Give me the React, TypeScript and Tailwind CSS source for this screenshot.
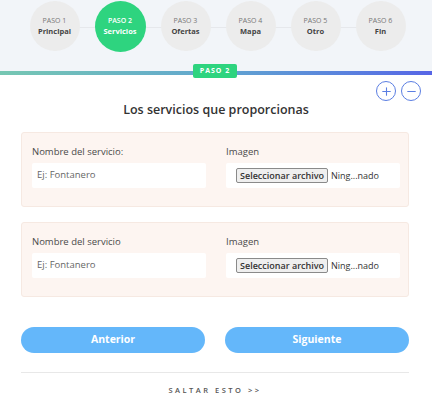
import { Plus, Minus } from 'lucide-react';

const steps = [
  { n: 1, name: 'Principal' },
  { n: 2, name: 'Servicios' },
  { n: 3, name: 'Ofertas' },
  { n: 4, name: 'Mapa' },
  { n: 5, name: 'Otro' },
  { n: 6, name: 'Fin' },
];

function ServiceCard({ label }: { label: string }) {
  return (
    <div className="grid h-[75px] grid-cols-2 gap-[20px] rounded-[3px] border border-[#f6e9e2] bg-[#fdf5f1] pt-[12px] pl-[10px] pr-[8px]">
      <div>
        <div className="mb-[4px] text-[9.5px] text-[#4a4a4a]">{label}</div>
        <div className="flex h-[25px] items-center rounded-[2px] bg-white px-[5px] text-[9.5px] text-[#666]">Ej: Fontanero</div>
      </div>
      <div>
        <div className="mb-[4px] text-[9.5px] text-[#4a4a4a]">Imagen</div>
        <div className="flex h-[25px] items-center gap-[3px] rounded-[2px] bg-white pl-[10px] pr-[4px] text-[9px] text-[#333]">
          <span className="rounded-[2px] border border-[#8a8a8a] bg-[#efefef] px-[3px] leading-[13px] font-semibold">Seleccionar archivo</span>
          <span>Ning...nado</span>
        </div>
      </div>
    </div>
  );
}

export default function App() {
  return (
    <div className="h-[415px] w-[432px] overflow-hidden bg-white" style={{ fontFamily: '"Open Sans", "Noto Sans", sans-serif' }}>
      <div className="relative bg-[#f2f5f9] pt-[1px] pb-[19px]">
        <div className="absolute left-[55px] right-[52px] top-[27px] h-px bg-[#e6e8ec]" />
        <div className="relative flex justify-center gap-[15px] pl-[3px]">
          {steps.map((s) => {
            const active = s.n === 2;
            return (
              <div
                key={s.n}
                className={
                  active
                    ? 'flex h-[51px] w-[51px] flex-col items-center justify-center rounded-full bg-[#2ed47f] text-white'
                    : 'flex h-[50px] w-[50px] flex-col items-center justify-center rounded-full bg-[#ececec] text-[#555]'
                }
              >
                <span className={active ? 'text-[7px] font-semibold leading-[10px]' : 'text-[7px] leading-[10px] text-[#777]'}>PASO {s.n}</span>
                <span className={active ? 'text-[7.5px] font-bold leading-[11px]' : 'text-[7.5px] font-bold leading-[11px] text-[#444]'}>{s.name}</span>
              </div>
            );
          })}
        </div>
      </div>
      <div className="relative h-[4px] bg-gradient-to-r from-[#76c7b2] via-[#62a6cf] to-[#5765e6]">
        <div className="absolute left-[193px] top-[-7px] flex h-[14px] w-[44px] items-center justify-center rounded-[2px] bg-[#2ed47f] text-[7px] font-bold tracking-[1px] text-white">
          PASO 2
        </div>
      </div>
      <div className="flex justify-end gap-[5px] pr-[11px] pt-[6px]">
        <div className="flex h-[20px] w-[20px] items-center justify-center rounded-full border-[1.5px] border-[#5b7ee2] text-[#5b7ee2]">
          <Plus size={13} strokeWidth={2} />
        </div>
        <div className="flex h-[20px] w-[20px] items-center justify-center rounded-full border-[1.5px] border-[#5b7ee2] text-[#5b7ee2]">
          <Minus size={13} strokeWidth={2} />
        </div>
      </div>
      <h1 className="text-center text-[12.5px] font-semibold text-[#333]">Los servicios que proporcionas</h1>
      <div className="ml-[21px] mt-[12px] w-[388px]">
        <div className="flex flex-col gap-[15px]">
          <ServiceCard label="Nombre del servicio:" />
          <ServiceCard label="Nombre del servicio" />
        </div>
        <div className="mt-[30px] grid grid-cols-2 gap-[20px]">
          <button className="h-[26px] rounded-full bg-[#64b7fa] text-[10.5px] font-bold text-white">Anterior</button>
          <button className="h-[26px] rounded-full bg-[#64b7fa] text-[10.5px] font-bold text-white">Siguiente</button>
        </div>
        <div className="mt-[19px] h-px bg-[#e8e8e8]" />
        <div className="mt-[12px] text-center text-[7.5px] font-semibold tracking-[2.5px] text-[#555]">SALTAR ESTO &gt;&gt;</div>
      </div>
    </div>
  );
}
